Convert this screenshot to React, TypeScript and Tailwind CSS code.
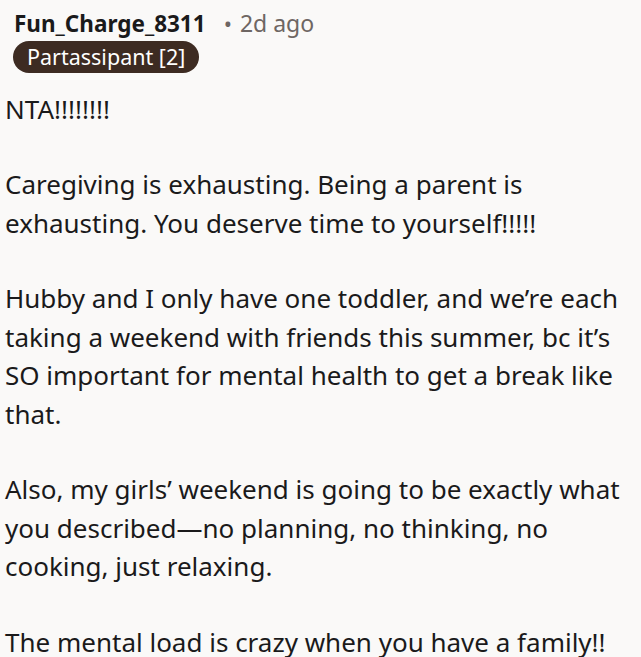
export default function App() {
  const paras = [
    "NTA!!!!!!!!",
    "Caregiving is exhausting. Being a parent is exhausting. You deserve time to yourself!!!!!",
    "Hubby and I only have one toddler, and we\u2019re each taking a weekend with friends this summer, bc it\u2019s SO important for mental health to get a break like that.",
    "Also, my girls\u2019 weekend is going to be exactly what you described\u2014no planning, no thinking, no cooking, just relaxing.",
    "The mental load is crazy when you have a family!!",
  ];
  return (
    <div className="w-[641px] h-[657px] overflow-hidden bg-[#faf9f8] text-[#1a1a1b]" style={{ fontFamily: '"Noto Sans", "Open Sans", sans-serif' }}>
      <div className="pl-[14px] pt-[6px] flex items-baseline">
        <span className="text-[22.5px] font-bold text-[#1a1a1b]">Fun_Charge_8311</span>
        <span className="ml-[18px] text-[22px] text-[#6e6663]">•</span>
        <span className="ml-[8px] text-[23px] text-[#6e6663]">2d ago</span>
      </div>
      <div className="pl-[13px]">
        <span className="inline-block rounded-full bg-[#3d2b22] text-white text-[21.5px] leading-[32px] px-[14px]">Partassipant [2]</span>
      </div>
      <div className="pl-[5px] pr-[4px] mt-[17px] text-[26px] leading-[38.5px]">
        {paras.map((p, i) => (
          <p key={i} className="mb-[37px]">{p}</p>
        ))}
      </div>
    </div>
  );
}
